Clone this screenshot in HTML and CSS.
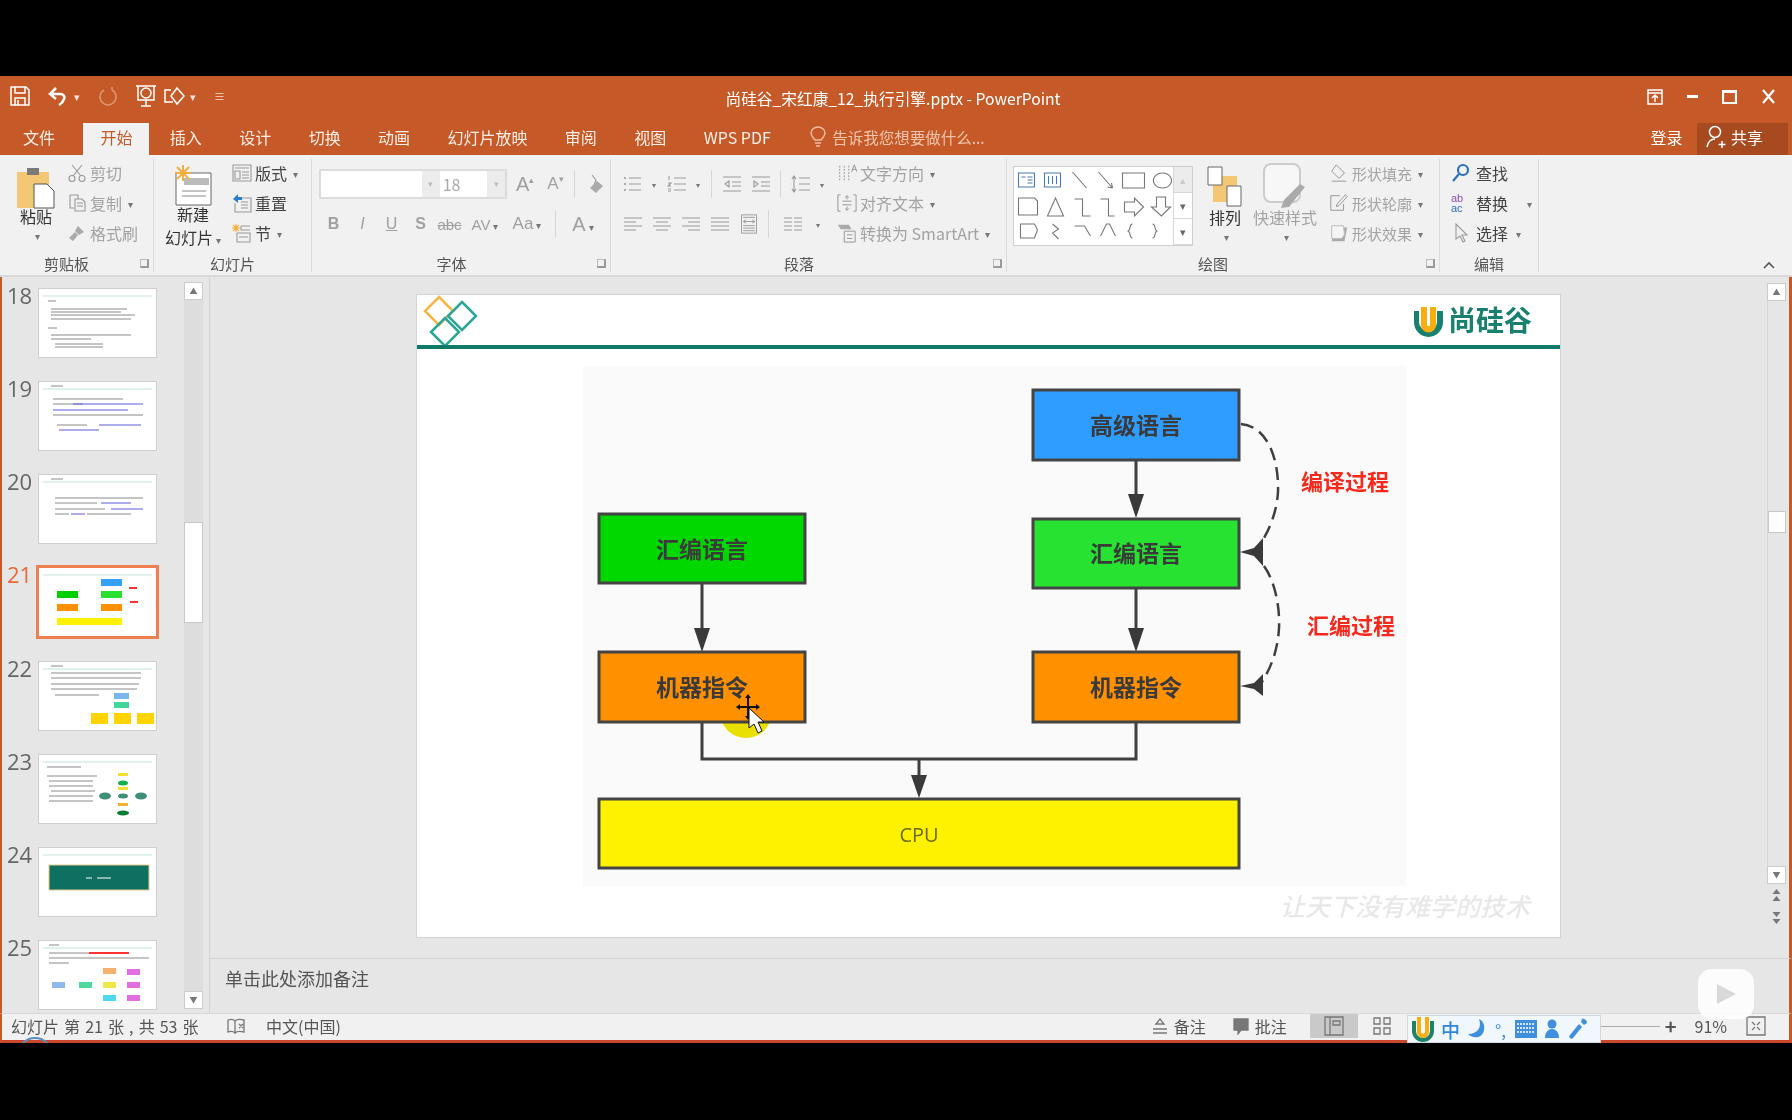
FILE: index.html
```html
<!DOCTYPE html>
<html lang="zh-CN">
<head>
	<meta charset="utf-8">
	<title>尚硅谷_宋红康_12_执行引擎.pptx - PowerPoint</title>
	<link rel="stylesheet" href="styles.css">
</head>
<body>
<svg class="defs" width="0" height="0">
	<symbol id="cut" viewBox="0 0 20 20"><path d="M5 2l9 11M15 2L6 13"/><circle cx="5" cy="15.500" r="3"/><circle cx="15" cy="15.500" r="3"/></symbol>
	<symbol id="copy" viewBox="0 0 20 20"><path d="M3 2h8v4M3 2v13h4M8 6h7l3 3v9H8zM10 10h6M10 13h6"/></symbol>
	<symbol id="brush" viewBox="0 0 20 20"><path class="fill" d="M11 3l6 6-5 3-4-4zM8 9l3 3-5 6-4-3z"/></symbol>
	<symbol id="layout" viewBox="0 0 20 20"><path d="M1 2h18v16H1zM3 5h14M3 8h5v8H3zM10 9h7M10 12h7M10 15h7"/></symbol>
	<symbol id="reset" viewBox="0 0 20 20"><path d="M6 5h13v14H3V10M9 9h7M9 12h7M9 15h7"/><path class="blue" d="M1 6l5-5v3h4v3H6v3z"/></symbol>
	<symbol id="section" viewBox="0 0 20 20"><path d="M9 3h9M9 3v4h9M5 10h13v9H5zM7 14h9"/><path class="orange" d="M4 1v8M0 5h8M1 2l6 6M7 2L1 8"/></symbol>
	<symbol id="eraser" viewBox="0 0 20 20"><path d="M7 1l4 5-2 5"/><path class="fill" d="M12 7l6 5-7 7-6-5z"/></symbol>
	<symbol id="bullets" viewBox="0 0 20 20"><path d="M6 4h12M6 10h12M6 16h12"/><path class="fill" d="M1 3h2v2H1zM1 9h2v2H1zM1 15h2v2H1z"/></symbol>
	<symbol id="numbers" viewBox="0 0 20 20"><path d="M7 4h12M7 10h12M7 16h12M2 2v4M1 9h3l-3 3h3M1 15h3M1 17h3"/></symbol>
	<symbol id="indl" viewBox="0 0 20 20"><path d="M1 3h18M10 8h9M10 12h9M1 17h18M7 7l-4 3 4 3z"/></symbol>
	<symbol id="indr" viewBox="0 0 20 20"><path d="M1 3h18M10 8h9M10 12h9M1 17h18M3 7l4 3-4 3z"/></symbol>
	<symbol id="spacing" viewBox="0 0 20 20"><path d="M8 4h11M8 10h11M8 16h11M3 3v14M1 5l2-3 2 3M1 15l2 3 2-3"/></symbol>
	<symbol id="al" viewBox="0 0 20 20"><path d="M1 4h18M1 8h12M1 12h18M1 16h12"/></symbol>
	<symbol id="ac" viewBox="0 0 20 20"><path d="M1 4h18M4 8h12M1 12h18M4 16h12"/></symbol>
	<symbol id="ar" viewBox="0 0 20 20"><path d="M1 4h18M7 8h12M1 12h18M7 16h12"/></symbol>
	<symbol id="aj" viewBox="0 0 20 20"><path d="M1 4h18M1 8h18M1 12h18M1 16h18"/></symbol>
	<symbol id="dist" viewBox="0 0 20 24"><path d="M1 1h18v22H1zM3 4h14M3 14h14M3 17h14M3 20h14M3 9h14M6 7L3 9l3 2M14 7l3 2-3 2"/></symbol>
	<symbol id="cols" viewBox="0 0 20 20"><path d="M1 4h8M11 4h8M1 8h8M11 8h8M1 12h8M11 12h8M1 16h8M11 16h8"/></symbol>
	<symbol id="textdir" viewBox="0 0 22 22"><path d="M3 3v16M8 3v16M13 3v16" stroke-dasharray="2 1.500"/><path d="M16 10l3-8 3 8M17 7h4"/></symbol>
	<symbol id="aligntext" viewBox="0 0 22 22"><path d="M4 2H1v18h3M18 2h3v18h-3M6 9h10M6 13h10M11 3v4M9 5l2-2 2 2M11 19v-4M9 17l2 2 2-2"/></symbol>
	<symbol id="smart" viewBox="0 0 22 22"><path class="fill" d="M1 2h12l3 5H4z"/><path d="M8 9h12v12H8zM11 13h6M11 17h6"/></symbol>
	<symbol id="shfill" viewBox="0 0 22 22"><path d="M8 2l9 9-6 6-8-8zM3 20h16"/></symbol>
	<symbol id="shline" viewBox="0 0 22 22"><path d="M12 3H2v16h14v-7M18 2l2 2-9 10-3 1 1-3z"/></symbol>
	<symbol id="sheff" viewBox="0 0 22 22"><path class="fill" d="M6 5h14l-3 15H3z"/><path class="wh" d="M3 3h13l1 10-3 4H3z"/></symbol>
	<symbol id="find" viewBox="0 0 20 20"><circle class="blue-line" cx="12" cy="7" r="5"/><path class="blue-line" d="M8 11l-6 7"/></symbol>
	<symbol id="arrow" viewBox="0 0 20 20"><path d="M5 1v15l4-3 3 6 2-1-3-6h5z"/></symbol>
</svg>

<div class="window">
	<header class="titlebar">
		<div class="qat">
			<svg class="w-ico q-save" width="20" height="20" viewBox="0 0 20 20"><path d="M1 1h15l3 3v15H1zM5 1v6h10V1M5 19v-7h10v7M8 14v5"/></svg>
			<svg class="w-ico q-undo" width="20" height="20" viewBox="0 0 20 20"><path d="M8 2L2 8l6 5M2 8h10c4 0 5 3 4 5-1 3-3 5-5 6" stroke-width="2.500"/></svg>
			<span class="qat-caret q-undo-caret">▾</span>
			<svg class="w-ico dim" width="20" height="20" viewBox="0 0 20 20"><path d="M6 4a8 8 0 1 0 8 0M14 4V1"/></svg>
			<svg class="w-ico q-show" width="22" height="24" viewBox="0 0 22 24"><path d="M1 2h20M3 2v14h16V2M11 16v5M6 22h10"/><circle cx="11" cy="9" r="5"/></svg>
			<svg class="w-ico q-shape" width="24" height="24" viewBox="0 0 24 24"><path d="M8 6H2v12h8M14 4l7 8-7 8-6-8z"/></svg>
			<span class="qat-caret q-shape-caret">▾</span>
			<span class="qat-caret">≡</span>
		</div>
		<div class="doc-title">尚硅谷_宋红康_12_执行引擎.pptx - PowerPoint</div>
		<div class="win-btns">
			<svg class="w-ico" width="16" height="16" viewBox="0 0 16 16"><path d="M1 1h14v14H1zM1 4h14M8 13V7M5 9l3-3 3 3"/></svg>
			<span class="min-btn"></span>
			<svg class="w-ico thick" width="15" height="15" viewBox="0 0 15 15"><path d="M1 2h13v12H1zM1 3h13"/></svg>
			<svg class="w-ico thick" width="15" height="15" viewBox="0 0 15 15"><path d="M2 1l11 13M13 1L2 14"/></svg>
		</div>
	</header>

	<nav class="tabs">
		<span class="tab file-tab">文件</span>
		<span class="tab active">开始</span>
		<span class="tab">插入</span>
		<span class="tab">设计</span>
		<span class="tab">切换</span>
		<span class="tab">动画</span>
		<span class="tab">幻灯片放映</span>
		<span class="tab">审阅</span>
		<span class="tab">视图</span>
		<span class="tab">WPS PDF</span>
		<span class="tell-me">
			<svg class="w-ico soft" width="16" height="22" viewBox="0 0 16 22"><path d="M5 14C3 11 1 10 1 7a7 6 0 0 1 14 0c0 3-2 4-4 7zM5 17h6M6 20h4"/></svg>
			告诉我您想要做什么...
		</span>
		<span class="login">登录</span>
		<span class="share">
			<svg class="w-ico" width="22" height="24" viewBox="0 0 22 24"><circle cx="9" cy="7" r="5.500"/><path d="M1 22c1-5 3-8 8-8M16 16v7M12.500 19.500h7"/></svg>
			共享
		</span>
	</nav>

	<section class="ribbon">
		<div class="group g-clip">
			<div class="group-body">
				<div class="big-btn paste">
					<svg width="38" height="44" viewBox="0 0 38 44"><path fill="#f3c774" d="M0 7h32v36H0z"/><path fill="#7a7a7a" d="M10 3h12v7H10z"/><path fill="#fff" stroke="#555" d="M17 19h13l7 7v17H17z"/></svg>
					<span class="strong">粘贴</span>
					<span class="caret">▾</span>
				</div>
				<div class="small-col">
					<div class="row off"><svg class="i"><use href="#cut"/></svg>剪切</div>
					<div class="row off"><svg class="i"><use href="#copy"/></svg>复制<span class="caret">▾</span></div>
					<div class="row off"><svg class="i"><use href="#brush"/></svg>格式刷</div>
				</div>
			</div>
			<div class="group-label">剪贴板<span class="launcher"></span></div>
		</div>

		<div class="group g-slides">
			<div class="group-body">
				<div class="big-btn newslide">
					<svg width="38" height="44" viewBox="0 0 38 44"><path fill="#fff" stroke="#666" d="M2 9h35v32H2z"/><path fill="#bbb" d="M10 14h25v7H10z"/><path stroke="#888" d="M8 27h24M8 32h24"/><path stroke="#f0b040" stroke-width="2" d="M9 1v16M1 9h16M3 3l12 12M15 3L3 15"/></svg>
					<span class="strong">新建</span>
					<span class="strong">幻灯片<span class="caret">▾</span></span>
				</div>
				<div class="small-col">
					<div class="row"><svg class="i"><use href="#layout"/></svg>版式<span class="caret">▾</span></div>
					<div class="row"><svg class="i"><use href="#reset"/></svg>重置</div>
					<div class="row"><svg class="i"><use href="#section"/></svg>节<span class="caret">▾</span></div>
				</div>
			</div>
			<div class="group-label">幻灯片</div>
		</div>

		<div class="group g-font">
			<div class="group-body stack">
				<div class="tool-row first">
					<div class="combo">
						<span class="combo-name"></span><span class="combo-drop">▾</span>
						<span class="combo-size">18</span><span class="combo-drop">▾</span>
					</div>
					<span class="glyph big">A<sup>▴</sup></span>
					<span class="glyph mid">A<sup>▾</sup></span>
					<span class="vsep"></span>
					<svg class="i"><use href="#eraser"/></svg>
				</div>
				<div class="tool-row font-row">
					<span class="glyph b">B</span>
					<span class="glyph it">I</span>
					<span class="glyph un">U</span>
					<span class="glyph b">S</span>
					<span class="glyph small strike">abc</span>
					<span class="glyph small">AV<span class="caret">▾</span></span>
					<span class="glyph small aa">Aa<span class="caret">▾</span></span>
					<span class="vsep"></span>
					<span class="glyph big">A<span class="caret">▾</span></span>
				</div>
			</div>
			<div class="group-label">字体<span class="launcher"></span></div>
		</div>

		<div class="group g-para">
			<div class="group-body">
				<div class="stack para-tools">
					<div class="tool-row first">
						<svg class="i"><use href="#bullets"/></svg><span class="caret">▾</span>
						<svg class="i"><use href="#numbers"/></svg><span class="caret">▾</span>
						<span class="vsep"></span>
						<svg class="i indent"><use href="#indl"/></svg>
						<svg class="i indent"><use href="#indr"/></svg>
						<span class="vsep"></span>
						<svg class="i"><use href="#spacing"/></svg><span class="caret">▾</span>
					</div>
					<div class="tool-row para-row">
						<svg class="i"><use href="#al"/></svg>
						<svg class="i"><use href="#ac"/></svg>
						<svg class="i"><use href="#ar"/></svg>
						<svg class="i"><use href="#aj"/></svg>
						<svg class="i"><use href="#dist"/></svg>
						<span class="vsep"></span>
						<svg class="i"><use href="#cols"/></svg><span class="caret">▾</span>
					</div>
				</div>
				<div class="small-col">
					<div class="row off"><svg class="i"><use href="#textdir"/></svg>文字方向<span class="caret">▾</span></div>
					<div class="row off"><svg class="i"><use href="#aligntext"/></svg>对齐文本<span class="caret">▾</span></div>
					<div class="row off"><svg class="i"><use href="#smart"/></svg>转换为 SmartArt<span class="caret">▾</span></div>
				</div>
			</div>
			<div class="group-label">段落<span class="launcher"></span></div>
		</div>

		<div class="group g-draw">
			<div class="group-body">
				<div class="gallery">
					<svg class="gallery-shapes" width="158" height="78" viewBox="0 0 158 78">
						<path class="blue-t" d="M4 6h16v14H4zM7 10h4M13 10h5M13 13h5M13 16h5M30 6h16v14H30zM34 9v8M38 9v8M42 9v8"/>
						<path d="M58 5l14 16M84 5l14 16M98 21l-5-1M98 21l-1-5M108 6h22v15h-22zM148 6a9 7.500 0 1 1-.1 0"/>
						<path d="M4 31h16l3 3v14H4zM33 49l8-18 8 18zM60 32h8v17h8M86 32h8v17h6M110 35h10v-4l9 9-9 9v-4h-10zM142 30h9v10h5l-9 9-10-9h5z"/>
						<path d="M6 57h14l3 6-3 8H6zM38 57l6 5-6 4 6 6M60 59h10l6 10M86 69l6-12h3l6 12M118 57c-4 0-1 7-5 7 4 0 1 7 5 7M138 57c4 0 1 7 5 7-4 0-1 7-5 7"/>
					</svg>
					<div class="gallery-scroll">
						<span class="gs-btn off">▴</span>
						<span class="gs-btn">▾</span>
						<span class="gs-btn">▾</span>
					</div>
				</div>
				<div class="big-btn arrange">
					<svg width="36" height="44" viewBox="0 0 36 44"><path fill="#f3c774" d="M6 10h24v26H6z"/><path fill="#fff" stroke="#666" d="M1 1h14v18H1zM20 20h14v20H20z"/></svg>
					<span class="strong">排列</span>
					<span class="caret">▾</span>
				</div>
				<div class="big-btn quick off">
					<svg width="46" height="48" viewBox="0 0 46 48"><rect x="2" y="2" width="36" height="38" rx="7" fill="#f7f7f7" stroke="#ccc" stroke-width="2"/><path fill="#aaa" d="M38 22l5 3-16 20-8 1 3-8z"/></svg>
					<span>快速样式</span>
					<span class="caret">▾</span>
				</div>
				<div class="small-col shape-col">
					<div class="row off"><svg class="i"><use href="#shfill"/></svg>形状填充<span class="caret">▾</span></div>
					<div class="row off"><svg class="i"><use href="#shline"/></svg>形状轮廓<span class="caret">▾</span></div>
					<div class="row off"><svg class="i"><use href="#sheff"/></svg>形状效果<span class="caret">▾</span></div>
				</div>
			</div>
			<div class="group-label">绘图<span class="launcher"></span></div>
		</div>

		<div class="group g-edit">
			<div class="group-body">
				<div class="small-col">
					<div class="row"><svg class="i"><use href="#find"/></svg>查找</div>
					<div class="row"><span class="i replace"><b>ab</b><b>ac</b></span>替换<span class="caret wide">▾</span></div>
					<div class="row"><svg class="i"><use href="#arrow"/></svg>选择<span class="caret">▾</span></div>
				</div>
			</div>
			<div class="group-label">编辑</div>
		</div>
		<svg class="collapse" width="12" height="8" viewBox="0 0 12 8"><path d="M1 7l5-5 5 5"/></svg>
	</section>

	<div class="workspace">
		<aside class="thumbs">
			<ol class="thumb-list">
				<li class="thumb-item">
					<span class="num">18</span>
					<svg class="thumb" viewBox="0 0 117 68"><path class="th-head" d="M4 7h109"/><path class="th-text" d="M9 12h8M12 20h76M12 23h70M12 26h84M12 30h80M9 39h9M12 46h80M12 50h40M16 55h48M16 58h48"/></svg>
				</li>
				<li class="thumb-item">
					<span class="num">19</span>
					<svg class="thumb" viewBox="0 0 117 68"><path class="th-head" d="M4 7h109"/><path class="th-text" d="M12 4h12M14 17h70M14 22h30M14 33h90M18 43h30"/><path class="th-link" d="M34 22h70M14 28h75M60 43h42M20 48h40"/></svg>
				</li>
				<li class="thumb-item">
					<span class="num">20</span>
					<svg class="thumb" viewBox="0 0 117 68"><path class="th-head" d="M4 7h109"/><path class="th-text" d="M12 4h12M16 23h88M16 28h42M16 34h50M16 39h14M48 39h44"/><path class="th-link" d="M62 28h30M72 34h32M32 39h14"/></svg>
				</li>
				<li class="thumb-item current">
					<span class="num">21</span>
					<svg class="thumb" viewBox="0 0 117 68">
						<path class="th-head" d="M4 7h109"/>
						<path fill="#36a0f8" d="M62 11h21v7H62z"/><path fill="#00d000" d="M18 23h21v7H18z"/><path fill="#2ae030" d="M62 23h21v7H62z"/>
						<path fill="#ff9000" d="M18 36h21v7H18zM62 36h21v7H62z"/><path fill="#fff000" d="M18 50h65v7H18z"/>
						<path fill="#f33" d="M90 19h8v2h-8zM91 33h8v2h-8z"/>
					</svg>
				</li>
				<li class="thumb-item">
					<span class="num">22</span>
					<svg class="thumb" viewBox="0 0 117 68"><path class="th-head" d="M4 7h109"/><path class="th-text" d="M12 4h12M12 11h90M12 16h90M12 22h88M12 27h86M16 33h44"/><path fill="#79b5ee" d="M75 31h15v6H75z"/><path fill="#3fd79a" d="M75 40h15v6H75z"/><path fill="#ffd400" d="M52 51h17v11H52zM75 51h17v11H75zM98 51h17v11H98z"/></svg>
				</li>
				<li class="thumb-item">
					<span class="num">23</span>
					<svg class="thumb" viewBox="0 0 117 68"><path class="th-head" d="M4 7h109"/><path class="th-text" d="M8 12h34M8 21h50M10 26h44M10 31h44M12 36h44M10 41h44M10 46h44"/><ellipse cx="66" cy="41" rx="6" ry="3.500" fill="#3d8f78"/><ellipse cx="102" cy="41" rx="6" ry="3.500" fill="#3d8f78"/><ellipse cx="84" cy="28" rx="5" ry="2.500" fill="#0db14b"/><ellipse cx="84" cy="41" rx="5" ry="2.500" fill="#3d8f78"/><ellipse cx="84" cy="58" rx="6" ry="2.500" fill="#087a36"/><path fill="#f0e030" d="M79 18h10v3H79zM79 32h10v3H79z"/><path fill="#f5b030" d="M79 48h10v3H79z"/></svg>
				</li>
				<li class="thumb-item">
					<span class="num">24</span>
					<svg class="thumb" viewBox="0 0 117 68"><path class="th-head" d="M4 7h109"/><path fill="#0f6f60" stroke="#e5c98a" d="M10 17h100v25H10z"/><path stroke="#fff" d="M47 30h6M58 30h14"/></svg>
				</li>
				<li class="thumb-item">
					<span class="num">25</span>
					<svg class="thumb" viewBox="0 0 117 68"><path class="th-head" d="M4 7h109"/><path class="th-text" d="M10 4h10M10 12h40M10 17h100M10 22h20"/><path fill="#f33" d="M50 11h40v2H50z"/><path fill="#8fb9ea" d="M13 41h13v6H13z"/><path fill="#4fd8a0" d="M40 41h13v6H40z"/><path fill="#f5b070" d="M64 27h13v6H64z"/><path fill="#f0e84a" d="M64 41h13v6H64z"/><path fill="#4fd8f0" d="M64 54h13v6H64z"/><path fill="#e070e0" d="M88 28h13v6H88zM88 41h13v6H88zM88 54h13v6H88z"/></svg>
				</li>
			</ol>
			<div class="thumb-scroll">
				<span class="sb-btn">▲</span>
				<span class="sb-track"><span class="sb-thumb"></span></span>
				<span class="sb-btn">▼</span>
			</div>
		</aside>

		<main class="editor">
			<div class="stage">
				<svg class="slide" width="1143" height="642" viewBox="417 295 1143 642">
					<rect x="417" y="295" width="1143" height="642" fill="#fff"/>
					<g class="logo-marks" fill="none" stroke-width="2.500">
						<path stroke="#f5b642" d="M439 297l14 14-14 14-14-14z"/>
						<path stroke="#2aa596" d="M462 302l14 14-14 14-14-14zM445 318l14 14-14 14-14-14z"/>
					</g>
					<path fill="#0f7a68" d="M417 345h1143v4H417z"/>
					<path fill="#17806e" d="M1414 311h5v11a9 9 0 0 0 18 0v-11h6v11a14.500 15 0 0 1-29 0z"/>
					<path fill="#f9ad0e" d="M1421 307h6v18c0 1.500 3 1.500 3 0v-18h6v18a7.500 7.500 0 0 1-15 0z"/>
					<text class="logo-text" x="1448" y="331">尚硅谷</text>

					<rect x="583" y="366" width="823" height="520" fill="#fafafa"/>

					<circle cx="746" cy="712" r="26" fill="#e8e000"/>

					<g class="wires">
						<path d="M1136 461v38M1136 588v44M702 584v48M702 722v37h434v-37M919 759v20"/>
					</g>
					<path class="heads" d="M1128 494h16l-8 24zM1128 628h16l-8 24zM694 628h16l-8 24zM911 775h16l-8 23z"/>

					<g class="boxes">
						<rect x="1033" y="390" width="206" height="70" fill="#2f9dff"/>
						<rect x="1033" y="519" width="206" height="69" fill="#28e232"/>
						<rect x="1033" y="652" width="206" height="70" fill="#ff9000"/>
						<rect x="599" y="514" width="206" height="69" fill="#00d800"/>
						<rect x="599" y="652" width="206" height="70" fill="#ff9000"/>
						<rect x="599" y="799" width="640" height="69" fill="#fff200"/>
					</g>
					<g class="box-text" text-anchor="middle">
						<text x="1136" y="434">高级语言</text>
						<text x="1136" y="562">汇编语言</text>
						<text x="1136" y="696">机器指令</text>
						<text x="702" y="558">汇编语言</text>
						<text x="702" y="696">机器指令</text>
						<text class="cpu" x="919" y="842">CPU</text>
					</g>

					<path class="dash" d="M1241 424c24 2 38 30 37 68-1 16-6 32-14 46"/>
					<path class="dash" d="M1264 566c10 14 16 38 15 62-1 20-7 38-17 54"/>
					<path class="heads" d="M1240 552l14-4 9-10v28l-9-10zM1240 686l14-3 9-9v22l-9-7z"/>

					<text class="red-note" x="1301" y="490">编译过程</text>
					<text class="red-note" x="1307" y="634">汇编过程</text>
					<text class="motto" x="1280" y="916">让天下没有难学的技术</text>

					<g class="cursor">
						<path d="M748 697v21M738 707h20" stroke="#111" stroke-width="2"/>
						<path fill="#111" d="M748 694l3 4h-6zM748 720l3-4h-6zM736 707l4-3v6zM760 707l-4-3v6z"/>
						<path fill="#fff" stroke="#111" d="M749 708v20l5-4 4 9 4-2-4-9h6z"/>
					</g>
				</svg>
				<div class="slide-scroll">
					<span class="sb-btn">▲</span>
					<span class="sb-track long"><span class="sb-thumb small"></span></span>
					<span class="sb-btn">▼</span>
					<svg class="page-btn" width="19" height="18" viewBox="0 0 19 18"><path d="M9.500 2l4 5h-8zM9.500 9l4 5h-8z"/></svg>
					<svg class="page-btn" width="19" height="18" viewBox="0 0 19 18"><path d="M9.500 9l4-5h-8zM9.500 16l4-5h-8z"/></svg>
				</div>
			</div>
			<div class="notes">单击此处添加备注</div>
		</main>
	</div>

	<footer class="statusbar">
		<span class="st-count">幻灯片 第 21 张 , 共 53 张</span>
		<svg class="st-ico" width="18" height="18" viewBox="0 0 18 18"><path d="M1 3c3-1 5-1 7 1v12c-2-2-4-2-7-1zM8 4c2-2 5-2 9-1v12c-4-1-7-1-9 1M12 7l4 4M16 7l-4 4"/></svg>
		<span class="st-lang">中文(中国)</span>
		<span class="st-right">
			<span class="st-item"><svg class="st-ico" width="18" height="18" viewBox="0 0 18 18"><path d="M2 12h14M2 16h14M5 7l4-5 4 5z"/></svg>备注</span>
			<span class="st-item last"><svg class="st-ico solid" width="18" height="18" viewBox="0 0 18 18"><path d="M2 2h14v11H9l-3 4v-4H2z"/></svg>批注</span>
			<span class="view-btn on"><svg class="st-ico" width="20" height="20" viewBox="0 0 20 20"><path d="M1 1h18v18H1zM6 1v18M9 5h7v4H9z"/></svg></span>
			<span class="view-btn"><svg class="st-ico" width="20" height="20" viewBox="0 0 20 20"><path d="M2 2h6v6H2zM12 2h6v6h-6zM2 12h6v6H2zM12 12h6v6h-6z"/></svg></span>
			<span class="ime-gap"></span>
			<span class="zoom-line"></span>
			<span class="zoom-plus">+</span>
			<span class="zoom-val">91%</span>
			<svg class="st-ico" width="20" height="20" viewBox="0 0 20 20"><path d="M1 1h18v18H1zM6 6l3 3M14 6l-3 3M6 14l3-3M14 14l-3-3"/></svg>
		</span>
	</footer>

	<div class="ime">
		<svg width="24" height="26" viewBox="0 0 24 26"><path fill="#1d8268" d="M1 5h4v10a7 7 0 0 0 14 0V5h4v10a11 11 0 0 1-22 0z"/><path fill="#f9ad0e" d="M6 1h4v15c0 2 4 2 4 0V1h4v15a6 6 0 0 1-12 0z"/></svg>
		<span class="ime-zh">中</span>
		<svg width="20" height="22" viewBox="0 0 20 22"><path fill="#3f8fdc" d="M13 1c3 8-1 15-11 15 3 4 14 6 16-4 1-5-1-9-5-11z"/></svg>
		<span class="ime-punc">°,</span>
		<svg width="24" height="20" viewBox="0 0 24 20"><path fill="#3f8fdc" d="M1 1h22v18H1z"/><path stroke="#fff" stroke-width="1.500" stroke-dasharray="2 1" d="M3 5h18M3 9h18M3 13h18"/></svg>
		<svg width="16" height="22" viewBox="0 0 16 22"><circle cx="8" cy="6" r="4.500" fill="#3f8fdc"/><path fill="#3f8fdc" d="M1 20c0-12 14-12 14 0z"/></svg>
		<svg class="ime-tool" width="20" height="22" viewBox="0 0 20 22"><path fill="#3f8fdc" d="M13 1c4-1 6 2 6 4l-3 2-3-3 1-3zM11 6l3 3L5 20c-2 2-5-1-3-3z"/></svg>
	</div>
	<div class="play-btn"><svg width="22" height="24" viewBox="0 0 22 24"><path fill="#d9d9d9" d="M2 2l19 10L2 22z"/></svg></div>
	<div class="corner-arc"></div>
</div>
</body>
</html>
```

FILE: styles.css
```css
* {
	box-sizing: border-box;
}

html, body {
	margin: 0;
	height: 100%;
	overflow: hidden;
	background-color: #000;
}

body {
	font-family: "Noto Sans CJK SC", "Noto Sans", sans-serif;
	font-size: 16px;
	color: #444;
}

.defs {
	position: absolute;
}

.window {
	position: relative;
	display: flex;
	flex-direction: column;
	height: 967px;
	margin-top: 76px;
	background-color: #e6e6e6;
	overflow: hidden;
	filter: blur(0.5px);
}

/* title bar */
.titlebar {
	display: grid;
	grid-template-columns: 1fr auto 1fr;
	align-items: center;
	height: 39px;
	padding: 0 16px 0 10px;
	background-color: #c55a28;
	color: #fff;
}

.qat {
	display: flex;
	align-items: center;
	gap: 6px;
}

.qat-caret {
	font-size: 11px;
	color: #f5e0d5;
}

.w-ico {
	flex: none;
	fill: none;
	stroke: #fff;
	stroke-width: 1.5;
}

.w-ico.dim { stroke: #dd9470; margin-right: 11px; }
.w-ico.soft { stroke: #eebca0; }
.w-ico.thick { stroke-width: 2.2; }

.q-save { margin-right: 12px; }
.q-undo-caret { margin-right: 12px; }
.q-shape { margin-right: -3px; }
.q-shape-caret { margin-right: 12px; }

.doc-title {
	font-size: 15.7px;
	padding-top: 6px;
}

.win-btns {
	display: flex;
	justify-content: flex-end;
	align-items: center;
	gap: 24px;
	padding-top: 2px;
}

.min-btn {
	width: 11px;
	height: 3px;
	background-color: #fff;
}

/* tabs */
.tabs {
	display: flex;
	align-items: stretch;
	gap: 3.4px;
	height: 40px;
	padding: 8px 4px 0 6px;
	background-color: #c55a28;
	color: #fbeee7;
}

.tab {
	padding: 2px 17px 0;
	line-height: 24px;
}

.file-tab {
	margin-right: 8px;
}

.tab.active {
	background-color: #f1f1f1;
	color: #c55a28;
}

.tell-me {
	display: flex;
	align-items: center;
	gap: 6px;
	height: 28px;
	margin-left: 19px;
	font-size: 15.5px;
	color: #f0c4ac;
}

.login {
	display: flex;
	align-items: center;
	height: 28px;
	margin-left: auto;
	margin-right: 11px;
	color: #fff;
}

.share {
	display: flex;
	align-items: center;
	gap: 3px;
	width: 91px;
	padding: 0 0 4px 9px;
	background-color: #a84a20;
	color: #fff;
}

/* ribbon */
.ribbon {
	position: relative;
	display: flex;
	height: 122px;
	padding: 4px 0 0 2px;
	background-color: #f1f1f1;
	border-bottom: 2px solid #d9d9d9;
}

.group {
	display: flex;
	flex-direction: column;
	height: 113px;
	border-right: 1px solid #dcdcdc;
}

.g-clip { width: 152px; }
.g-slides { width: 158px; }
.g-font { width: 299px; }
.g-para { width: 396px; }
.g-draw { width: 433px; }
.g-edit { width: 99px; }

.group-body {
	display: flex;
	height: 90px;
}

.group-label {
	position: relative;
	height: 23px;
	padding-top: 4px;
	font-size: 15px;
	line-height: 22px;
	text-align: center;
	color: #555;
}

.g-clip .group-label { padding-right: 22px; }
.g-font .group-label { padding-right: 19px; }
.g-para .group-label { padding-right: 19px; }
.g-draw .group-label { padding-right: 20px; }

.launcher {
	position: absolute;
	right: 4px;
	top: 10px;
	width: 9px;
	height: 9px;
	border-left: 1px solid #bbb;
	border-top: 1px solid #bbb;
	border-right: 2px solid #999;
	border-bottom: 2px solid #999;
}

.big-btn {
	display: flex;
	flex-direction: column;
	align-items: center;
	font-size: 16px;
	line-height: 20px;
}

.big-btn svg {
	margin-bottom: -3px;
	flex: none;
}

.strong {
	color: #333;
}

.caret {
	font-size: 10px;
	color: #777;
	margin-left: 3px;
}

.caret.wide {
	margin-left: 14px;
}

.paste {
	width: 48px;
	margin-left: 10px;
	padding-top: 6px;
}

.newslide {
	width: 78px;
	padding-top: 5px;
	line-height: 23px;
}

.big-btn.newslide svg {
	margin-bottom: -5px;
}

.small-col {
	display: flex;
	flex-direction: column;
	margin-top: -1px;
}

.g-clip .small-col { margin-left: 7px; }
.g-slides .small-col { margin-left: 0; }

.row {
	display: flex;
	align-items: center;
	gap: 3px;
	height: 30px;
	white-space: nowrap;
	color: #444;
}

.row.off, .off {
	color: #a3a3a3;
}

.i {
	flex: none;
	width: 20px;
	height: 20px;
	fill: none;
	stroke: #999;
	stroke-width: 1.1;
}

.fill { fill: #aaa; stroke: none; }
.blue { fill: #2b7cd3; stroke: none; }
.orange { stroke: #f0b040; }
.wh { fill: #f5f5f5; stroke: #bbb; }
.blue-line { stroke: #2b6fc0; stroke-width: 2.2; }

.replace {
	display: flex;
	flex-direction: column;
	font-family: "Liberation Sans", sans-serif;
	font-size: 11px;
	color: #2b6fc0;
}

.replace b {
	display: block;
	height: 10px;
	font-weight: 400;
	line-height: 10px;
}

.replace b:first-child {
	color: #8552b8;
}

/* font group */
.stack {
	display: flex;
	flex-direction: column;
}

.tool-row {
	display: flex;
	align-items: center;
	height: 30px;
}

.tool-row.first {
	margin-top: 10px;
}

.font-row {
	margin-top: 10px;
	padding-left: 7px;
}

.font-row .glyph {
	flex: none;
	width: 29px;
	text-align: center;
}

.font-row .caret {
	margin-right: -13px;
}

.font-row .vsep {
	margin: 0 6px 0 20px;
}

.combo {
	display: flex;
	width: 188px;
	height: 30px;
	margin: 0 9px 0 7px;
	border: 2px solid #dcdcdc;
	background-color: #fff;
	font-size: 16px;
	color: #aaa;
}

.combo-name { width: 102px; }

.combo-drop {
	width: 18px;
	background-color: #ececec;
	font-size: 9px;
	line-height: 26px;
	text-align: center;
	color: #bbb;
}

.combo-size {
	width: 48px;
	padding-left: 3px;
	line-height: 26px;
}

.glyph {
	color: #a0a0a0;
	font-family: "Liberation Sans", sans-serif;
	white-space: nowrap;
}

.glyph sup {
	font-size: 9px;
}

.glyph.big { font-size: 20px; margin-right: 4px; }
.glyph.mid { font-size: 17px; margin-left: 9px; }
.glyph.small { font-size: 15px; }
.glyph.b { font-weight: bold; }
.glyph.it { font-style: italic; }
.glyph.un { text-decoration: underline; }
.glyph.strike { text-decoration: line-through; }
.glyph.aa { font-size: 17px; margin-left: 13px; }

.vsep {
	flex: none;
	width: 1px;
	height: 28px;
	margin: 0 10px;
	background-color: #d5d5d5;
}

/* paragraph group */
.para-tools {
	width: 228px;
	padding-left: 12px;
}

.para-tools .caret {
	margin: 0 11px 0 4px;
	font-size: 8px;
}

.para-tools .tool-row .i {
	margin-right: 5px;
}

.para-tools .tool-row .i.indent {
	margin-right: 9px;
}

.para-tools .vsep {
	margin: 0 10px 0 0;
}

.para-row {
	margin-top: 10px;
	gap: 4px;
}

.g-para .small-col {
	margin-left: -2px;
}

/* drawing group */
.gallery {
	display: flex;
	width: 180px;
	height: 80px;
	margin: 7px 0 0 6px;
	background-color: #fff;
	border: 1px solid #cfcfcf;
}

.gallery-shapes {
	flex: 1;
	fill: none;
	stroke: #777;
	stroke-width: 1.1;
}

.gallery-shapes .blue-t {
	stroke: #4a7ab8;
}

.gallery-scroll {
	display: flex;
	flex-direction: column;
	width: 19px;
	border-left: 1px solid #d8d8d8;
}

.gs-btn {
	flex: 1;
	font-size: 11px;
	line-height: 24px;
	text-align: center;
	color: #666;
	border-bottom: 1px solid #d8d8d8;
}

.gs-btn.off {
	background-color: #ececec;
	color: #ccc;
}

.arrange {
	width: 58px;
	margin-left: 3px;
	padding-top: 7px;
}

.quick {
	width: 66px;
	margin-left: -2px;
	padding-top: 3px;
}

.shape-col {
	margin-left: 11px;
	font-size: 15px;
}

.g-edit .small-col {
	margin-left: 11px;
}

.g-edit .row {
	gap: 5px;
}

.collapse {
	position: absolute;
	right: 17px;
	top: 106px;
	fill: none;
	stroke: #555;
	stroke-width: 1.6;
}

/* left thumbnails */
.workspace {
	display: flex;
	flex: 1;
	min-height: 0;
}

.thumbs {
	display: flex;
	flex: none;
	width: 210px;
	padding: 5px 6px 4px 2px;
	border-right: 1px solid #d4d4d4;
	border-left: 2px solid #c55a28;
}

.thumb-list {
	display: flex;
	flex-direction: column;
	gap: 25.15px;
	width: 180px;
	margin: 7px 0 0;
	padding: 0;
	list-style: none;
}

.thumb-item {
	display: flex;
	align-items: flex-start;
	flex: none;
	height: 68px;
}

.num {
	width: 35px;
	margin-top: -7px;
	padding-left: 3px;
	font-family: "Open Sans", sans-serif;
	font-size: 22px;
	line-height: 26px;
	color: #666;
}

.current .num {
	color: #e9693a;
}

.thumb {
	flex: none;
	width: 117px;
	height: 68px;
	background-color: #fff;
	fill: none;
	stroke: none;
	outline: 1px solid #cfcfcf;
}

.current .thumb {
	outline: 3px solid #ee8050;
}

.th-head { stroke: #c7e3dc; stroke-width: 1; }
.th-text { stroke: #8a8a8a; stroke-width: 1; }
.th-link { stroke: #5a5ae0; stroke-width: 1; }

.thumb-scroll, .slide-scroll {
	display: flex;
	flex-direction: column;
	flex: none;
	width: 19px;
}

.sb-btn {
	flex: none;
	height: 18px;
	background-color: #fff;
	border: 1px solid #ccc;
	font-size: 8px;
	line-height: 15px;
	text-align: center;
	color: #777;
}

.sb-track {
	display: block;
	flex: 1;
	padding-top: 222px;
	background-color: #dcdddc;
}

.sb-thumb {
	display: block;
	height: 101px;
	background-color: #fff;
	border: 1px solid #c8c8c8;
}

/* editing area */
.editor {
	display: flex;
	flex-direction: column;
	flex: 1;
	min-width: 0;
}

.stage {
	display: flex;
	flex: 1;
	padding: 18px 3px 0 207px;
	border-right: 3px solid #c55a28;
}

.slide {
	flex: none;
	outline: 1px solid #d4d4d4;
}

.slide-scroll {
	height: 650px;
	margin: -12px 0 0 207px;
}

.sb-track.long {
	flex: none;
	height: 565px;
	padding-top: 210px;
	background-color: #e6e6e6;
	border-left: 1px solid #d8d8d8;
}

.sb-thumb.small {
	height: 22px;
}

.page-btn {
	flex: none;
	margin-top: 3px;
	fill: #777;
}

.logo-text {
	font-size: 28px;
	font-weight: 700;
	fill: #17806e;
}

.wires path {
	fill: none;
	stroke: #3f3f3f;
	stroke-width: 3;
}

.heads {
	fill: #3a3a3a;
}

.boxes rect {
	stroke: #444;
	stroke-width: 3;
}

.box-text text {
	font-size: 23px;
	font-weight: 700;
	fill: #3a3a3a;
}

.box-text .cpu {
	font-family: "Open Sans", sans-serif;
	font-size: 20px;
	font-weight: 400;
	fill: #6a6a00;
}

.dash {
	fill: none;
	stroke: #3f3f3f;
	stroke-width: 2.5;
	stroke-dasharray: 13 7;
}

.red-note {
	font-size: 22px;
	font-weight: 700;
	fill: #f5291c;
}

.motto {
	font-size: 25px;
	font-style: italic;
	font-weight: 500;
	fill: #e8e8e8;
}

.notes {
	flex: none;
	height: 55px;
	padding: 6px 0 0 15px;
	border-top: 1px solid #d4d4d4;
	border-right: 3px solid #c55a28;
	font-size: 18px;
	color: #555;
}

/* status bar */
.statusbar {
	display: flex;
	align-items: center;
	flex: none;
	height: 30px;
	padding: 0 23px 2px 9px;
	background-color: #f1f1f1;
	border-top: 1px solid #d9d9d9;
	border-bottom: 3px solid #c8462a;
	border-left: 2px solid #c55a28;
	border-right: 3px solid #c55a28;
	font-size: 16px;
	color: #555;
}

.st-count {
	width: 216px;
	word-spacing: 1.5px;
}

.st-ico {
	flex: none;
	fill: none;
	stroke: #777;
	stroke-width: 1.3;
}

.st-ico.solid {
	fill: #777;
}

.st-lang {
	margin-left: 21px;
}

.st-right {
	display: flex;
	align-items: center;
	margin-left: auto;
	height: 100%;
}

.st-item {
	display: flex;
	align-items: center;
	gap: 5px;
	margin-right: 26px;
}

.st-item.last {
	margin-right: 23px;
}

.view-btn {
	display: flex;
	align-items: center;
	justify-content: center;
	width: 48px;
	height: 100%;
}

.view-btn.on {
	background-color: #c9c9c9;
}

.ime-gap {
	width: 195px;
}

.zoom-line {
	width: 59px;
	height: 1px;
	background-color: #aaa;
}

.zoom-plus {
	margin-left: 5px;
	font-size: 20px;
	font-weight: bold;
	line-height: 20px;
}

.zoom-val {
	margin: 0 19px 0 18px;
}

/* things over the window */
.ime {
	position: absolute;
	left: 1407px;
	top: 939px;
	display: flex;
	align-items: center;
	gap: 6px;
	width: 194px;
	height: 28px;
	padding-left: 3px;
	background-color: #f0f7fd;
	border: 1px solid #cfd8e0;
}

.ime-zh {
	font-size: 19px;
	font-weight: 500;
	color: #2f86d8;
}

.ime-punc {
	margin: 0 2px 0 3px;
	font-size: 17px;
	color: #3f8fdc;
}

.ime-tool {
	margin-left: 2px;
}

.play-btn {
	position: absolute;
	left: 1698px;
	top: 893px;
	display: flex;
	align-items: center;
	justify-content: center;
	width: 56px;
	height: 50px;
	background-color: rgba(255, 255, 255, 0.85);
	border-radius: 14px;
}

.corner-arc {
	position: absolute;
	left: 17px;
	top: 961px;
	width: 36px;
	height: 36px;
	border: 2px solid #5b8fc0;
	border-radius: 50%;
}
```
